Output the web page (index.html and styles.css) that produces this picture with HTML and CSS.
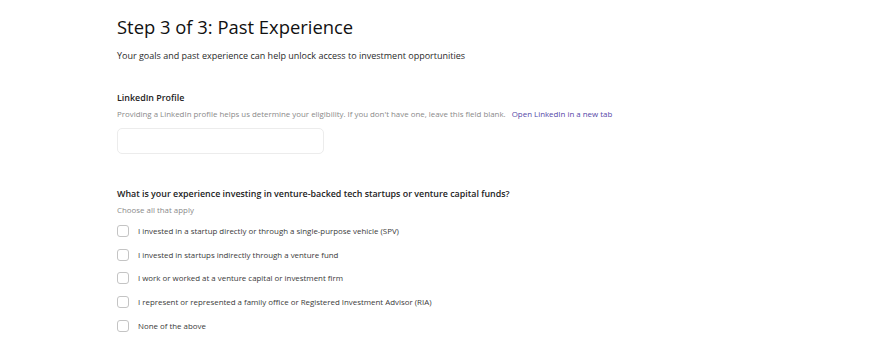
FILE: index.html
```html
<!DOCTYPE html>
<html lang="en">

<head>
    <meta charset="UTF-8">
    <meta name="viewport" content="width=device-width, initial-scale=1.0">
    <title>Past Experience</title>
    <link rel="stylesheet" href="styles.css">
</head>

<body>
    <div class="container">
        <h1>Step 3 of 3: Past Experience</h1>
        <p class="subtitle">Your goals and past experience can help unlock access to investment opportunities</p>

        <!-- LinkedIn -->
        <div class="field">
            <label class="field-label" for="linkedin">LinkedIn Profile</label>
            <p class="hint">Providing a LinkedIn profile helps us determine your eligibility. If you don't have one, leave this field blank. <a href="#" class="link">Open LinkedIn in a new tab</a></p>
            <input type="text" id="linkedin" class="text-input">
        </div>

        <!-- Experience -->
        <div class="field question">
            <div class="field-label">What is your experience investing in venture-backed tech startups or venture capital funds?</div>
            <p class="hint">Choose all that apply</p>
            <ul class="options">
                <li><label><span class="box"></span>I invested in a startup directly or through a single-purpose vehicle (SPV)</label></li>
                <li><label><span class="box"></span>I invested in startups indirectly through a venture fund</label></li>
                <li><label><span class="box"></span>I work or worked at a venture capital or investment firm</label></li>
                <li><label><span class="box"></span>I represent or represented a family office or Registered Investment Advisor (RIA)</label></li>
                <li><label><span class="box"></span>None of the above</label></li>
            </ul>
        </div>
    </div>
</body>
</html>
```

FILE: styles.css
```css
body {
    font-family: 'Open Sans', sans-serif;
    margin: 0;
    padding: 0;
    background: white;
    color: #222;
}

.container {
    padding: 14px 0 0 117px;
}

h1 {
    font-size: 18.4px;
    font-weight: 500;
    margin: 0;
    line-height: 26px;
    color: #111;
}

.subtitle {
    font-size: 9px;
    margin: 10px 0 0;
    line-height: 12px;
    color: #2a2a2a;
}

.field {
    margin-top: 29px;
}

.field-label {
    display: block;
    font-size: 8.9px;
    font-weight: 600;
    line-height: 13px;
    color: #222;
}

.hint {
    font-size: 7.9px;
    line-height: 12px;
    margin: 4px 0 0;
    color: #8a8a8a;
}

.link {
    color: #5547a8;
    text-decoration: none;
    margin-left: 4px;
}

.text-input {
    display: block;
    width: 207px;
    height: 26px;
    box-sizing: border-box;
    margin-top: 8px;
    border: 1px solid #ececec;
    border-radius: 5px;
    outline: none;
}

.question {
    margin-top: 33px;
}

.options {
    list-style: none;
    margin: 3px 0 0;
    padding: 0;
}

.options li {
    height: 23.75px;
    display: flex;
    align-items: center;
}

.options label {
    display: flex;
    align-items: center;
    font-size: 7.9px;
    color: #3a3a3a;
}

.box {
    width: 12px;
    height: 12px;
    box-sizing: border-box;
    border: 1px solid #c4c4c4;
    border-radius: 3px;
    margin-right: 9px;
}
```
